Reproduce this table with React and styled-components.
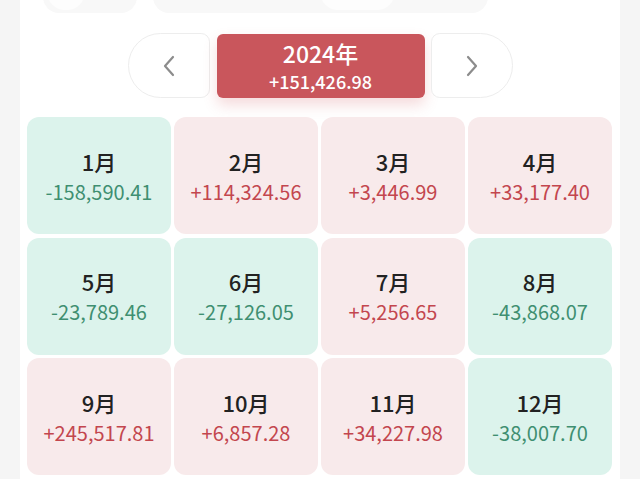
import React from 'react';
import styled, { createGlobalStyle } from 'styled-components';

const GlobalStyle = createGlobalStyle`
	html, body {
		margin: 0;
		padding: 0;
		background: #f5f5f5;
		font-family: "Noto Sans CJK SC", "Noto Sans", Roboto, sans-serif;
	}
`;

const Panel = styled.div`
	width: 600px;
	margin-left: 20px;
	min-height: 479px;
	background: #ffffff;
	overflow: hidden;
`;

const TopBar = styled.div`
	height: 13px;
	display: flex;
	align-items: flex-end;
	overflow: hidden;
`;

const Pill = styled.div`
	flex: none;
	display: flex;
	align-items: flex-end;
	height: 40px;
	width: ${(p) => p.w}px;
	margin-left: ${(p) => p.ml}px;
	padding-left: ${(p) => p.pl || 0}px;
	box-sizing: border-box;
	border-radius: 0 0 16px 16px;
	background: #f8f8f8;
`;

const PillInner = styled.div`
	height: 36px;
	width: ${(p) => p.w}px;
	border-radius: 0 0 18px 18px;
	background: #fdfdfd;
	margin-bottom: 3px;
`;

const NavRow = styled.div`
	display: flex;
	justify-content: center;
	align-items: center;
	margin-top: 20px;
	height: 65px;
`;

const ArrowButton = styled.div`
	width: 82px;
	height: 65px;
	box-sizing: border-box;
	border: 1px solid #ededed;
	background: #fff;
	display: flex;
	align-items: center;
	justify-content: center;
	border-radius: ${(p) => (p.side === 'left' ? '33px 9px 9px 33px' : '9px 33px 33px 9px')};
	color: #8c8c8c;
`;

const YearButton = styled.div`
	width: 208px;
	height: 64px;
	margin: 0 6px 0 7px;
	border-radius: 6px;
	background: #c9565c;
	color: #fff;
	display: flex;
	flex-direction: column;
	align-items: center;
	justify-content: center;
	box-shadow: 0 7px 14px rgba(210, 90, 95, 0.22);
`;

const YearTitle = styled.div`
	font-size: 23px;
	font-weight: 500;
	line-height: 29px;
`;

const YearTotal = styled.div`
	font-size: 18px;
	font-weight: 500;
	line-height: 24px;
	margin-top: 1px;
`;

const Grid = styled.div`
	display: grid;
	grid-template-columns: repeat(4, 144px);
	grid-auto-rows: 117px;
	gap: 3.5px 3px;
	padding: 19px 7px 0;
`;

const Card = styled.div`
	border-radius: 12px;
	background: ${(p) => (p.up ? '#f8eaeb' : '#dcf3ec')};
	display: flex;
	flex-direction: column;
	align-items: center;
	justify-content: center;
	gap: 3px;
`;

const Month = styled.div`
	font-size: 22px;
	font-weight: 500;
	line-height: 29px;
	color: #222;
`;

const Amount = styled.div`
	font-size: 20px;
	font-weight: 400;
	line-height: 26px;
	color: ${(p) => (p.up ? '#c3464e' : '#3f8f71')};
`;

const Chevron = ({ dir }) => (
	<svg width="14" height="24" viewBox="0 0 14 24" fill="none">
		<path
			d={dir === 'left' ? 'M11 3 L3 12 L11 21' : 'M3 3 L11 12 L3 21'}
			stroke="currentColor"
			strokeWidth="2.2"
			strokeLinecap="round"
			strokeLinejoin="round"
		/>
	</svg>
);

const months = [
	['1月', '-158,590.41'],
	['2月', '+114,324.56'],
	['3月', '+3,446.99'],
	['4月', '+33,177.40'],
	['5月', '-23,789.46'],
	['6月', '-27,126.05'],
	['7月', '+5,256.65'],
	['8月', '-43,868.07'],
	['9月', '+245,517.81'],
	['10月', '+6,857.28'],
	['11月', '+34,227.98'],
	['12月', '-38,007.70'],
];

const App = () => (
	<>
		<GlobalStyle />
		<Panel>
			<TopBar>
				<Pill w={94} ml={23} pl={4}>
					<PillInner w={38} />
				</Pill>
				<Pill w={335} ml={16} pl={167}>
					<PillInner w={75} />
				</Pill>
			</TopBar>
			<NavRow>
				<ArrowButton side="left">
					<Chevron dir="left" />
				</ArrowButton>
				<YearButton>
					<YearTitle>2024年</YearTitle>
					<YearTotal>+151,426.98</YearTotal>
				</YearButton>
				<ArrowButton side="right">
					<Chevron dir="right" />
				</ArrowButton>
			</NavRow>
			<Grid>
				{months.map(([m, v]) => {
					const up = v.startsWith('+');
					return (
						<Card key={m} up={up}>
							<Month>{m}</Month>
							<Amount up={up}>{v}</Amount>
						</Card>
					);
				})}
			</Grid>
		</Panel>
	</>
);

export default App;
